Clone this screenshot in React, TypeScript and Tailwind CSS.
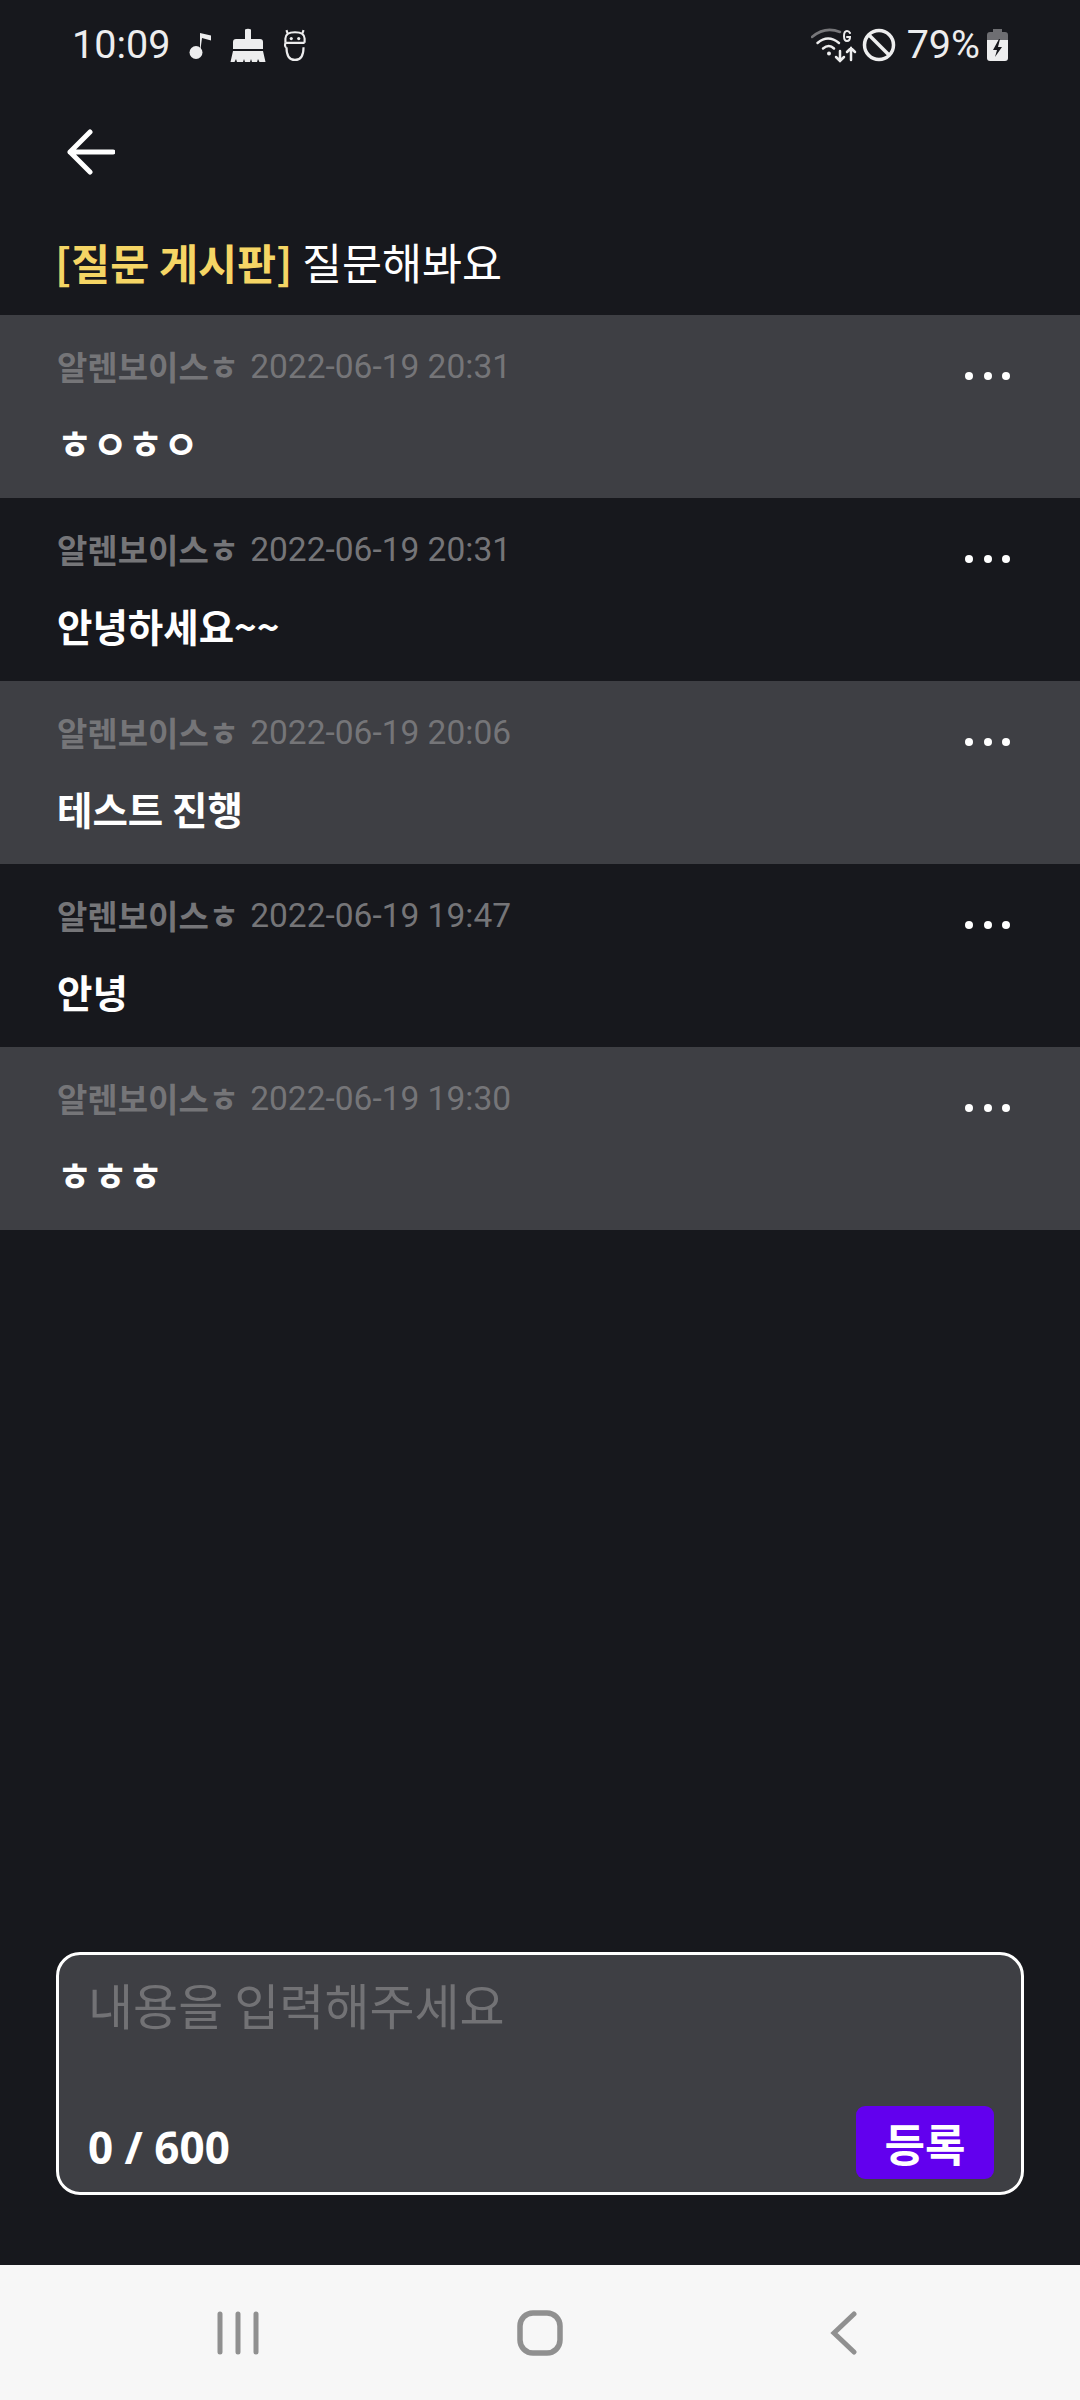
const posts = [
  { date: '2022-06-19 20:31', text: 'ㅎㅇㅎㅇ', shaded: true },
  { date: '2022-06-19 20:31', text: '안녕하세요~~', shaded: false },
  { date: '2022-06-19 20:06', text: '테스트 진행', shaded: true },
  { date: '2022-06-19 19:47', text: '안녕', shaded: false },
  { date: '2022-06-19 19:30', text: 'ㅎㅎㅎ', shaded: true },
]

function StatusBar() {
  return (
    <div className="flex h-[90px] items-center justify-between pl-[72px] pr-[72px] font-['Roboto',sans-serif] text-[#ededee]">
      <div className="flex items-center">
        <span className="text-[39.500px] leading-none">10:09</span>
        {/* music note */}
        <svg className="ml-[19px]" width="24" height="30" viewBox="0 0 24 30">
          <circle cx="7" cy="22.500" r="6.500" fill="#ededee" />
          <path d="M11 23V3l11 2.500v5L13 8" fill="#ededee" />
        </svg>
        {/* broom */}
        <svg className="ml-[17px]" width="36" height="34" viewBox="0 0 36 34">
          <path d="M15 1.500q3-1.500 6 0V11h9q3 0 3 3v7H3v-7q0-3 3-3h9z" fill="#ededee" />
          <path d="M3 23h30l2.500 11h-6l-1.500-3-1 3h-5l-1-3-1 3h-5l-1-3-1 3H7l-1-3-1.500 3H.5z" fill="#ededee" />
        </svg>
        {/* face */}
        <svg className="ml-[17px]" width="24" height="32" viewBox="0 0 22 30" fill="none" stroke="#ededee" strokeWidth="2">
          <path d="M2 13V9q0-6 9-6t9 6v4" />
          <path d="M2 13h18M3 17q0 12 8 12t8-12" />
          <path d="M2 13q-1 4 1 4M4 4 3 1M18 4l1-3" />
          <circle cx="7.500" cy="9" r="1.500" fill="#ededee" stroke="none" />
          <circle cx="14.500" cy="9" r="1.500" fill="#ededee" stroke="none" />
        </svg>
      </div>
      <div className="flex items-center">
        {/* wifi with data arrows */}
        <svg width="46" height="36" viewBox="0 0 46 36" fill="none" strokeLinecap="round">
          <path d="M1 10Q14-1 29 5" stroke="#77777a" strokeWidth="2.500" />
          <path d="M6.500 16Q17 7 28 16" stroke="#ededee" strokeWidth="2.500" />
          <path d="M12 21.500q6-5 11 0" stroke="#ededee" strokeWidth="2.500" />
          <circle cx="18" cy="26.500" r="2" fill="#ededee" />
          <path d="M29 24v10M25 30l4 4 4-4M40 33V21M36 25l4-4 4 4" stroke="#ededee" strokeWidth="2.500" />
          <path d="M39 6q-1-2-3-2-3 0-3 5t3 5q3 0 3-4h-3" stroke="#ededee" strokeWidth="2" />
        </svg>
        {/* do not disturb */}
        <svg className="ml-[5px]" width="34" height="34" viewBox="0 0 34 34" fill="none" stroke="#ededee" strokeWidth="3.500">
          <circle cx="17" cy="17" r="14.500" />
          <path d="M7 7l20 20" />
        </svg>
        <span className="ml-[11px] text-[39.500px] leading-none">79%</span>
        {/* battery charging */}
        <svg className="ml-[7px]" width="21" height="32" viewBox="0 0 21 32">
          <path d="M6 0h9v3h3q3 0 3 3v6H0V6q0-3 3-3h3z" fill="#6e6e72" />
          <path d="M0 11h21v18q0 3-3 3H3q-3 0-3-3z" fill="#ededee" />
          <path d="M12 10l-6 11h4l-2 7 7-10h-4l2-8z" fill="#17181d" />
        </svg>
      </div>
    </div>
  )
}

function PostRow({ date, text, shaded }: { date: string; text: string; shaded: boolean }) {
  return (
    <div className={`relative h-[183px] pl-[57px] ${shaded ? 'bg-[#3e3f44]' : ''}`}>
      <div className="flex h-[103px] items-center text-[#757578]">
        <span className="-mt-[1px] text-[33px] font-bold leading-none">알렌보이스ㅎ</span>
        <span className="ml-[11px] font-['Roboto',sans-serif] text-[33.500px] leading-none">{date}</span>
      </div>
      <div className="-mt-[1px] text-[38.500px] font-bold leading-[50px] text-white">{text}</div>
      <div className="absolute left-[965px] top-[57px] flex gap-[10.500px]">
        <span className="h-[8px] w-[8px] rounded-full bg-white" />
        <span className="h-[8px] w-[8px] rounded-full bg-white" />
        <span className="h-[8px] w-[8px] rounded-full bg-white" />
      </div>
    </div>
  )
}

export default function App() {
  return (
    <div className="flex h-[2400px] w-[1080px] flex-col overflow-hidden bg-[#17181d] font-['Noto_Sans_CJK_KR','Noto_Sans',sans-serif]">
      <StatusBar />

      {/* Back button */}
      <div className="flex h-[120px] items-center pl-[67px] pt-[4px]">
        <svg width="48" height="46" viewBox="0 0 48 46" fill="none" stroke="white" strokeWidth="5" strokeLinecap="round" strokeLinejoin="round">
          <path d="M23 3 3 23l20 20M3 23h43" />
        </svg>
      </div>

      {/* Title */}
      <div className="h-[105px] pl-[55px] pt-[21px] text-[43.500px] leading-[62px] text-white">
        <span className="text-[42.500px] font-bold text-[#f5d565]">[질문 게시판]</span> 질문해봐요
      </div>

      <div>
        {posts.map((post, i) => (
          <PostRow key={i} {...post} />
        ))}
      </div>

      <div className="flex-1" />

      {/* Input box */}
      <div className="mx-[56px] mb-[70px] h-[243px] rounded-[24px] border-[3px] border-white bg-[#3e3f44] pl-[29px] pr-[27px]">
        <div className="pt-[19px] text-[49px] leading-[60px] text-[#727275]">내용을 입력해주세요</div>
        <div className="mt-[72px] flex items-center justify-between">
          <span className="pt-[8px] font-['Noto_Sans',sans-serif] text-[44px] font-bold leading-none text-white">0 / 600</span>
          <button className="h-[73px] w-[138px] rounded-[9px] bg-[#6200ee] text-[44px] font-bold leading-none text-white">등록</button>
        </div>
      </div>

      {/* Navigation bar */}
      <div className="flex h-[135px] items-center bg-[#f7f7f7] pl-[217px]">
        <svg width="42" height="44" viewBox="0 0 42 44" stroke="#909090" strokeWidth="5" strokeLinecap="round">
          <path d="M3 3v38M21 3v38M39 3v38" />
        </svg>
        <svg className="ml-[258px]" width="46" height="46" viewBox="0 0 46 46" fill="none" stroke="#909090" strokeWidth="5.500">
          <rect x="3" y="3" width="40" height="40" rx="13" />
        </svg>
        <svg className="ml-[266px]" width="28" height="44" viewBox="0 0 28 44" fill="none" stroke="#909090" strokeWidth="5" strokeLinecap="round" strokeLinejoin="miter">
          <path d="M25 3 5 22l20 19" />
        </svg>
      </div>
    </div>
  )
}
